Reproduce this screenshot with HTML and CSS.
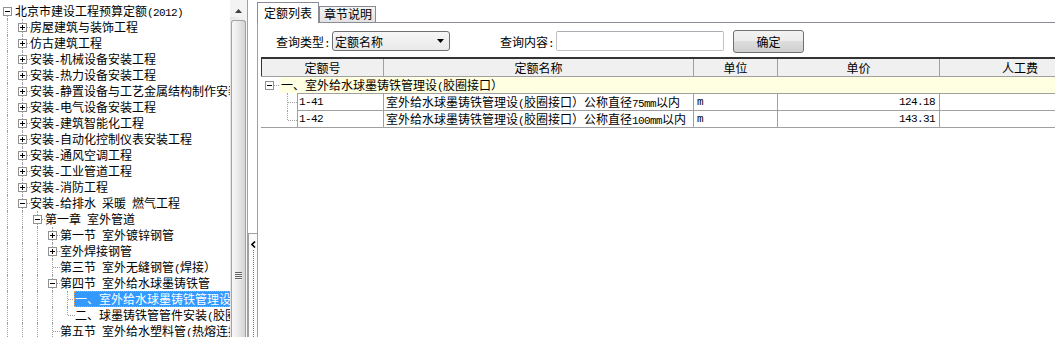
FILE: index.html
```html
<!DOCTYPE html>
<html lang="zh-CN">
<head>
  <meta charset="UTF-8">
  <title>定额库</title>
  <link rel="stylesheet" href="styles.css">
</head>
<body>
  <div class="app">
    <div class="tree-pane">
      <div class="tree">
        <div class="node"><span class="g r"><span class="box"></span></span><span class="label">北京市建设工程预算定额<span class="mono">(2012)</span></span></div>
        <div class="node"><span class="g v"></span><span class="g t"><span class="box plus"></span></span><span class="label">房屋建筑与装饰工程</span></div>
        <div class="node"><span class="g v"></span><span class="g t"><span class="box plus"></span></span><span class="label">仿古建筑工程</span></div>
        <div class="node"><span class="g v"></span><span class="g t"><span class="box plus"></span></span><span class="label">安装<span class="mono">-</span>机械设备安装工程</span></div>
        <div class="node"><span class="g v"></span><span class="g t"><span class="box plus"></span></span><span class="label">安装<span class="mono">-</span>热力设备安装工程</span></div>
        <div class="node"><span class="g v"></span><span class="g t"><span class="box plus"></span></span><span class="label">安装<span class="mono">-</span>静置设备与工艺金属结构制作安装工程</span></div>
        <div class="node"><span class="g v"></span><span class="g t"><span class="box plus"></span></span><span class="label">安装<span class="mono">-</span>电气设备安装工程</span></div>
        <div class="node"><span class="g v"></span><span class="g t"><span class="box plus"></span></span><span class="label">安装<span class="mono">-</span>建筑智能化工程</span></div>
        <div class="node"><span class="g v"></span><span class="g t"><span class="box plus"></span></span><span class="label">安装<span class="mono">-</span>自动化控制仪表安装工程</span></div>
        <div class="node"><span class="g v"></span><span class="g t"><span class="box plus"></span></span><span class="label">安装<span class="mono">-</span>通风空调工程</span></div>
        <div class="node"><span class="g v"></span><span class="g t"><span class="box plus"></span></span><span class="label">安装<span class="mono">-</span>工业管道工程</span></div>
        <div class="node"><span class="g v"></span><span class="g t"><span class="box plus"></span></span><span class="label">安装<span class="mono">-</span>消防工程</span></div>
        <div class="node"><span class="g v"></span><span class="g t"><span class="box"></span></span><span class="label">安装<span class="mono">-</span>给排水<span class="sp"></span>采暖<span class="sp"></span>燃气工程</span></div>
        <div class="node"><span class="g v"></span><span class="g v"></span><span class="g t"><span class="box"></span></span><span class="label">第一章<span class="sp"></span>室外管道</span></div>
        <div class="node"><span class="g v"></span><span class="g v"></span><span class="g v"></span><span class="g t"><span class="box plus"></span></span><span class="label">第一节<span class="sp"></span>室外镀锌钢管</span></div>
        <div class="node"><span class="g v"></span><span class="g v"></span><span class="g v"></span><span class="g t"><span class="box plus"></span></span><span class="label">室外焊接钢管</span></div>
        <div class="node"><span class="g v"></span><span class="g v"></span><span class="g v"></span><span class="g t"></span><span class="label">第三节<span class="sp"></span>室外无缝钢管<span class="mono">(</span>焊接）</span></div>
        <div class="node"><span class="g v"></span><span class="g v"></span><span class="g v"></span><span class="g t"><span class="box"></span></span><span class="label">第四节<span class="sp"></span>室外给水球墨铸铁管</span></div>
        <div class="node"><span class="g v"></span><span class="g v"></span><span class="g v"></span><span class="g v"></span><span class="g t"></span><span class="label sel">一、室外给水球墨铸铁管理设<span class="mono">(</span>胶圈接口）</span></div>
        <div class="node"><span class="g v"></span><span class="g v"></span><span class="g v"></span><span class="g v"></span><span class="g l"></span><span class="label">二、球墨铸铁管管件安装<span class="mono">(</span>胶圈接口）</span></div>
        <div class="node"><span class="g v"></span><span class="g v"></span><span class="g v"></span><span class="g t"></span><span class="label">第五节<span class="sp"></span>室外给水塑料管<span class="mono">(</span>热熔连接）</span></div>
      </div>
      <div class="vscroll">
        <div class="sb-up">
          <svg width="7" height="4" viewBox="0 0 7 4"><polygon points="3.5,0 7,4 0,4" fill="#404040"/></svg>
        </div>
        <div class="sb-thumb"><span class="grip"></span></div>
      </div>
    </div>

    <div class="splitter">
      <div class="split-btn">
        <svg class="chev" width="5" height="7" viewBox="0 0 5 7"><polyline points="4,0.5 1,3.5 4,6.5" fill="none" stroke="#000" stroke-width="1.6"/></svg>
        <span class="split-dots"></span>
      </div>
    </div>

    <div class="main">
      <div class="tabs">
        <div class="tab active">定额列表</div>
        <div class="tab">章节说明</div>
      </div>
      <div class="tab-body">
        <div class="query">
          <span class="q-label">查询类型<span class="mono">:</span></span>
          <div class="select">
            <span>定额名称</span>
            <svg width="7" height="4" viewBox="0 0 7 4"><polygon points="0,0 7,0 3.5,4" fill="#000"/></svg>
          </div>
          <span class="q-label second">查询内容<span class="mono">:</span></span>
          <input class="q-input" type="text">
          <button class="btn">确定</button>
        </div>

        <div class="grid">
          <div class="gh">
            <div class="h h1">定额号</div>
            <div class="h h2">定额名称</div>
            <div class="h h3">单位</div>
            <div class="h h4">单价</div>
            <div class="h h5">人工费</div>
          </div>
          <div class="gg">
            <span class="gd grp"><span class="box"></span></span>
            <span class="gtext">一、室外给水球墨铸铁管理设<span class="mono">(</span>胶圈接口）</span>
          </div>
          <div class="gr first">
            <span class="gd"></span><span class="gd t"></span>
            <span class="c c1 mono">1-41</span>
            <span class="c c2">室外给水球墨铸铁管理设<span class="mono">(</span>胶圈接口）公称直径<span class="mono">75mm</span>以内</span>
            <span class="c c3 mono">m</span>
            <span class="c c4 mono">124.18</span>
            <span class="c c5"></span>
          </div>
          <div class="gr">
            <span class="gd"></span><span class="gd l"></span>
            <span class="c c1 mono">1-42</span>
            <span class="c c2">室外给水球墨铸铁管理设<span class="mono">(</span>胶圈接口）公称直径<span class="mono">100mm</span>以内</span>
            <span class="c c3 mono">m</span>
            <span class="c c4 mono">143.31</span>
            <span class="c c5"></span>
          </div>
          <div class="gend"></div>
        </div>
      </div>
    </div>
  </div>
</body>
</html>
```

FILE: styles.css
```css
* { box-sizing: border-box; }
html, body {
  margin: 0;
  padding: 0;
}
body {
  font-family: "Noto Sans CJK SC", "Microsoft YaHei", sans-serif;
  font-size: 12px;
  color: #000;
  background: #fff;
  overflow: hidden;
}
.mono {
  font-family: "Liberation Mono", "DejaVu Sans Mono", monospace;
  font-size: 11px;
  letter-spacing: -0.6px;
}
.sp {
  display: inline-block;
  width: 6px;
}
.app {
  display: flex;
  width: 1055px;
  height: 337px;
}

/* left tree */
.tree-pane {
  display: flex;
  width: 248px;
  flex: none;
  border-right: 1px solid #a0a0a0;
}
.tree {
  width: 230px;
  flex: none;
  overflow: hidden;
  padding-top: 3px;
}
.node {
  display: flex;
  align-items: center;
  height: 16px;
  white-space: nowrap;
}
.g {
  position: relative;
  width: 15px;
  height: 16px;
  flex: none;
}
.g.v::before, .g.t::before, .g.l::before, .g.r::before {
  content: "";
  position: absolute;
  left: 7px;
  top: 0;
  bottom: 0;
  border-left: 1px dotted #a0a0a0;
}
.g.l::before { bottom: 8px; }
.g.r::before { top: 8px; }
.g.t::after, .g.l::after {
  content: "";
  position: absolute;
  left: 8px;
  right: 0;
  top: 8px;
  border-top: 1px dotted #a0a0a0;
}
.box {
  position: absolute;
  left: 3px;
  top: 4px;
  width: 9px;
  height: 9px;
  border: 1px solid #919191;
  background: #fff;
  z-index: 1;
}
.box::before {
  content: "";
  position: absolute;
  left: 1px;
  top: 3px;
  width: 5px;
  height: 1px;
  background: #000;
}
.box.plus::after {
  content: "";
  position: absolute;
  left: 3px;
  top: 1px;
  width: 1px;
  height: 5px;
  background: #000;
}
.label {
  height: 16px;
  line-height: 16px;
  padding: 0 1px;
  margin-left: -1px;
}
.label.sel {
  background: #3399ff;
  color: #fff;
  outline: 1px dotted #f0a040;
  outline-offset: -1px;
}

/* scrollbar */
.vscroll {
  width: 17px;
  flex: none;
  display: flex;
  flex-direction: column;
  background: linear-gradient(to right, #e6e6e6, #f5f5f5);
}
.sb-up {
  height: 17px;
  flex: none;
  display: flex;
  align-items: center;
  justify-content: center;
  padding-top: 5px;
  background: #f3f3f3;
}
.sb-thumb {
  flex: 1;
  margin: 3px 1px 0 1px;
  border: 1px solid #a3a3a3;
  border-bottom: none;
  border-radius: 3px 3px 0 0;
  background: linear-gradient(to right, #f7f7f7, #eaeaea 45%, #d4d4d4);
  display: flex;
  flex-direction: column;
  align-items: center;
}
.grip {
  margin-top: 251px;
  width: 7px;
  height: 8px;
  background: repeating-linear-gradient(to bottom, #606060 0 1px, #f4f4f4 1px 2px);
}

/* splitter */
.splitter {
  width: 9px;
  flex: none;
  display: flex;
  flex-direction: column;
}
.split-btn {
  margin-top: 233px;
  flex: 1;
  border-left: 1px solid #a0a0a0;
  border-top: 1px solid #a0a0a0;
  background: #fbfbfb;
  display: flex;
  flex-direction: column;
  align-items: center;
}
.chev { margin-top: 7px; }
.split-dots {
  margin-top: 2px;
  flex: 1;
  border-left: 1px dotted #3d7ad6;
}

/* right side */
.main {
  flex: 1;
  min-width: 0;
  display: flex;
  flex-direction: column;
  overflow: hidden;
}
.tabs {
  display: flex;
  align-items: flex-end;
  height: 23px;
  flex: none;
  border-bottom: 1px solid #898c95;
}
.tab {
  height: 16px;
  line-height: 14px;
  padding: 0 3px 0 4px;
  border: 1px solid #898c95;
  border-bottom: none;
  background: linear-gradient(#f4f4f4, #e2e2e2);
  white-space: nowrap;
}
.tab.active {
  height: 21px;
  line-height: 20px;
  margin-bottom: -1px;
  padding: 0 6px;
  background: #fff;
}
.tab-body {
  flex: 1;
  border-left: 1px solid #a0a0a0;
  overflow: hidden;
}
.query {
  display: flex;
  align-items: center;
  height: 24px;
  margin-top: 6px;
  padding-left: 18px;
}
.q-label {
  width: 56px;
  flex: none;
  white-space: nowrap;
}
.q-label.second { margin-left: 50px; }
.select {
  width: 118px;
  height: 20px;
  border: 1px solid #707070;
  border-radius: 3px;
  background: linear-gradient(#f6f6f6, #e9e9e9);
  display: flex;
  align-items: center;
  justify-content: space-between;
  padding: 0 5px 0 2px;
}
.q-input {
  width: 168px;
  height: 20px;
  margin: 0;
  padding: 0 2px;
  border: 1px solid #c3c3c3;
  border-top-color: #abadb3;
  border-radius: 2px;
  font: inherit;
}
.btn {
  margin-left: 9px;
  width: 71px;
  height: 23px;
  padding: 0;
  border: 1px solid #707070;
  border-radius: 3px;
  background: linear-gradient(#f2f2f2 0, #ebebeb 50%, #dddddd 50%, #cfcfcf 100%);
  font: inherit;
  color: #000;
}

/* grid */
.grid {
  width: 839px;
  margin: 4px 0 0 3px;
}
.gh {
  display: flex;
  height: 20px;
  border-top: 2px solid #333;
  border-bottom: 1px solid #a0a0a0;
  background: #f0f0f0;
}
.h {
  flex: none;
  text-align: center;
  line-height: 17px;
  border-right: 1px solid #a0a0a0;
}
.h1 { width: 123px; border-left: 1px solid #333; }
.h2 { width: 310px; }
.h3 { width: 84px; }
.h4 { width: 162px; }
.h5 { width: 160px; border-right: none; }
.gg {
  display: flex;
  height: 16px;
}
.gd {
  position: relative;
  width: 18px;
  flex: none;
}
.gd.grp .box { left: 4px; top: 4px; }
.gd.grp::after {
  content: "";
  position: absolute;
  left: 12px;
  right: 0;
  top: 8px;
  border-top: 1px dotted #a0a0a0;
}
.gtext {
  flex: 1;
  background: #ffffe1;
  padding-left: 2px;
  line-height: 16px;
  white-space: nowrap;
}
.gr {
  display: flex;
  height: 17px;
}
.gr.first { height: 18px; }
.gd.t::before, .gd.l::before {
  content: "";
  position: absolute;
  left: 8px;
  top: 0;
  bottom: 0;
  border-left: 1px dotted #a0a0a0;
}
.gd.l::before { bottom: 50%; }
.gd.t::after, .gd.l::after {
  content: "";
  position: absolute;
  left: 9px;
  right: 0;
  top: 50%;
  border-top: 1px dotted #a0a0a0;
}
.c {
  flex: none;
  border-right: 1px solid #a0a0a0;
  border-bottom: 1px solid #a0a0a0;
  line-height: 16px;
  padding-left: 1px;
  white-space: nowrap;
  overflow: hidden;
}
.gr.first .c { border-top: 1px solid #a0a0a0; }
.c1 { width: 87px; border-left: 1px solid #a0a0a0; }
.c2 { width: 310px; padding-left: 2px; }
.c3 { width: 84px; padding-left: 3px; }
.c4 { width: 162px; text-align: right; padding-right: 4px; }
.c5 { width: 160px; border-right: none; }
.gend {
  margin-top: -1px;
  border-top: 1px solid #a0a0a0;
}
```
